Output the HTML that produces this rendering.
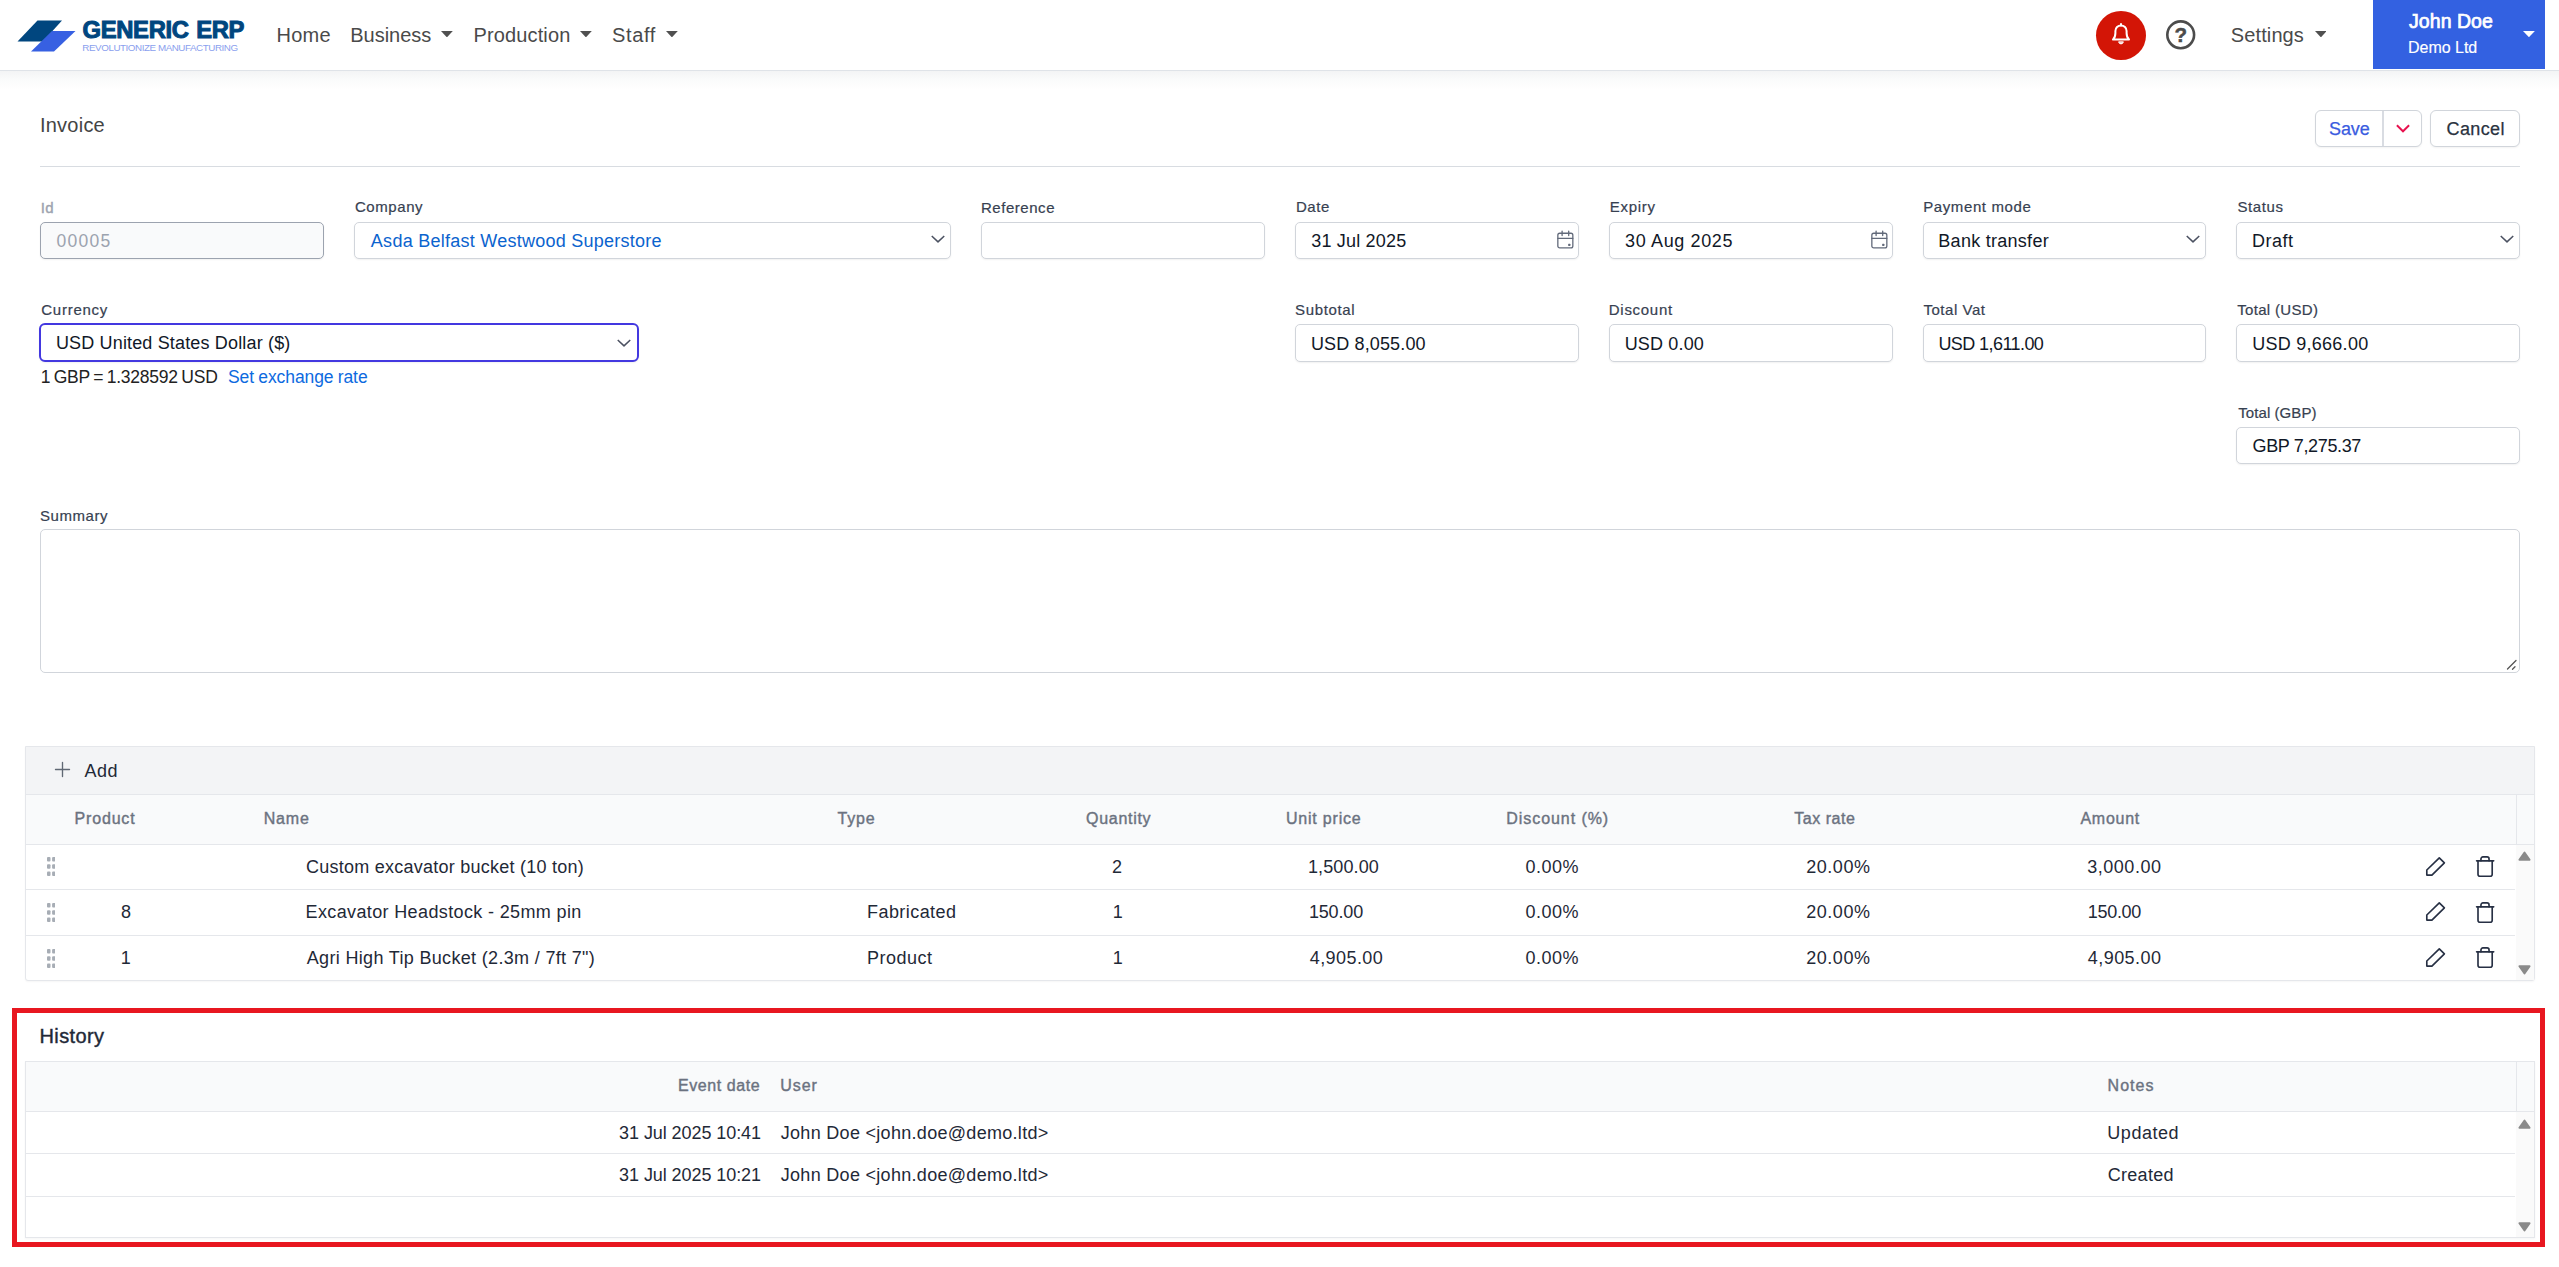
<!DOCTYPE html>
<html lang="en">
<head>
<meta charset="utf-8">
<title>Invoice - Generic ERP</title>
<style>
*{box-sizing:border-box;margin:0;padding:0}
html,body{width:2559px;height:1267px;overflow:hidden;background:#fff}
body{font-family:"Liberation Sans",sans-serif;color:#1f2937;position:relative}
.abs{position:absolute}
.t{position:absolute;white-space:nowrap;line-height:1}
#nav{position:absolute;left:0;top:0;width:2559px;height:71px;background:#fff;border-bottom:1px solid #dfe3e8}
#navshadow{position:absolute;left:0;top:71px;width:2559px;height:19px;background:linear-gradient(#f3f4f5,#fafbfb 45%,#fff)}
.caret{position:absolute;width:0;height:0;border-left:5.8px solid transparent;border-right:5.8px solid transparent;border-top:7px solid #505050}
#user{position:absolute;left:2373px;top:0;width:172px;height:69px;background:#3361e1}
.inp{position:absolute;border:1px solid #d1d5db;border-radius:5px;background:#fff;box-shadow:0 1px 2px rgba(0,0,0,.06)}
.hl{position:absolute;height:1px;background:#e5e7eb}
.vl{position:absolute;width:1px;background:#e5e7eb}
.dots{position:absolute;width:9px;height:19px}
</style>
</head>
<body>
<div id="nav">
<svg class="abs" style="left:16px;top:18px" width="62" height="36" viewBox="0 0 62 36">
<polygon points="21.5,2.5 46,2.5 27,23.5 1.5,23.5" fill="#00467f"/>
<polygon points="36,13 59.5,13 38,33.5 15,33.5" fill="#3760e2"/>
</svg>
<div class="t" id="brand1" style="left:82.50px;top:18px;font-size:23.8px;color:#00467f;letter-spacing:-0.320px;word-spacing:1.200px;font-weight:700;-webkit-text-stroke:1.0px #00467f;">GENERIC ERP</div>
<div class="t" id="brand2" style="left:82.37px;top:43px;font-size:9.8px;color:#8aa0ee;letter-spacing:-0.436px;">REVOLUTIONIZE MANUFACTURING</div>
<div class="t" id="n1" style="left:276.56px;top:25px;font-size:20px;color:#4a4a4a;letter-spacing:0.242px;">Home</div>
<div class="t" id="n2" style="left:350.26px;top:25px;font-size:20px;color:#4a4a4a;letter-spacing:-0.010px;">Business</div>
<svg class="abs" style="left:441.1px;top:31.1px" width="11.8" height="6.4" viewBox="0 0 11.8 6.4"><polygon points="0,0 11.8,0 5.9,6.4" fill="#505050"/></svg>
<div class="t" id="n3" style="left:473.56px;top:25px;font-size:20px;color:#4a4a4a;letter-spacing:0.123px;">Production</div>
<svg class="abs" style="left:580.1px;top:31.1px" width="11.8" height="6.4" viewBox="0 0 11.8 6.4"><polygon points="0,0 11.8,0 5.9,6.4" fill="#505050"/></svg>
<div class="t" id="n4" style="left:612.12px;top:25px;font-size:20px;color:#4a4a4a;letter-spacing:0.596px;">Staff</div>
<svg class="abs" style="left:666.1px;top:31.1px" width="11.8" height="6.4" viewBox="0 0 11.8 6.4"><polygon points="0,0 11.8,0 5.9,6.4" fill="#505050"/></svg>
<div class="abs" style="left:2096px;top:11px;width:50px;height:49px;border-radius:50%;background:#d31506"></div>
<svg class="abs" style="left:2108.700px;top:21.300px" width="24" height="26" viewBox="0 0 24 26" fill="none" stroke="#fff" stroke-width="2" stroke-linecap="round" stroke-linejoin="round">
<path d="M4 18.500h16c-1.800-1.600-2.400-3.400-2.400-6.500V10a5.600 5.600 0 0 0-11.200 0v2c0 3.100-.6 4.900-2.400 6.500z"/>
<path d="M12 4.400V3"/>
<path d="M9.700 21.200a2.400 2.400 0 0 0 4.600 0z" fill="#fff" stroke-width="1"/>
</svg>
<svg class="abs" style="left:2164px;top:18px" width="34" height="34" viewBox="0 0 34 34">
<circle cx="16.700" cy="16.800" r="13.400" fill="none" stroke="#4c4c4c" stroke-width="2.600"/>
<text x="16.800" y="23.900" text-anchor="middle" font-family="Liberation Sans, sans-serif" font-weight="700" font-size="20.500" fill="#4c4c4c" stroke="#4c4c4c" stroke-width=".5">?</text>
</svg>
<div class="t" id="n5" style="left:2230.82px;top:25px;font-size:20px;color:#4a4a4a;letter-spacing:0.110px;">Settings</div>
<svg class="abs" style="left:2314.6px;top:31.1px" width="11.8" height="6.4" viewBox="0 0 11.8 6.4"><polygon points="0,0 11.8,0 5.9,6.4" fill="#505050"/></svg>
<div id="user"></div>
<div class="t" id="u1" style="left:2409.09px;top:12px;font-size:19.5px;color:#fff;letter-spacing:0.036px;-webkit-text-stroke:0.7px #fff;">John Doe</div>
<div class="t" id="u2" style="left:2408.07px;top:40px;font-size:16px;color:#fff;letter-spacing:-0.027px;-webkit-text-stroke:0.15px #fff;">Demo Ltd</div>
<svg class="abs" style="left:2523.3px;top:31.1px" width="11.9" height="6.2" viewBox="0 0 11.9 6.2"><polygon points="0,0 11.9,0 5.95,6.2" fill="#fff"/></svg>
</div>
<div id="navshadow"></div>
<div class="t" id="title" style="left:39.90px;top:115px;font-size:20px;color:#444;letter-spacing:0.248px;">Invoice</div>
<div class="abs" style="left:2315px;top:110px;width:107px;height:37px;border:1px solid #d1d5db;border-radius:6px;background:#fff;box-shadow:0 1px 2px rgba(0,0,0,.05)"></div>
<div class="abs" style="left:2382px;top:111px;width:2px;height:35px;background:#d9dce2"></div>
<svg class="abs" style="left:2395px;top:122px" width="16" height="13" viewBox="0 0 16 13" fill="none" stroke="#e8124f" stroke-width="1.900" stroke-linecap="butt" stroke-linejoin="miter"><path d="M1.900 3.300L8 9.300L14.100 3.300"/></svg>
<div class="abs" style="left:2430px;top:110px;width:90px;height:37px;border:1px solid #d1d5db;border-radius:6px;background:#fff;box-shadow:0 1px 2px rgba(0,0,0,.05)"></div>
<div class="abs" style="left:40px;top:166px;width:2480px;height:1px;background:#d8dce1"></div>
<div class="t" id="bsave" style="left:2329.12px;top:120px;font-size:18px;color:#3a5ce0;letter-spacing:-0.144px;-webkit-text-stroke:0.25px #3a5ce0;">Save</div>
<div class="t" id="bcancel" style="left:2446.53px;top:120px;font-size:18px;color:#2a3240;letter-spacing:0.390px;-webkit-text-stroke:0.25px #2a3240;">Cancel</div>
<div class="t" style="left:40.71px;top:200px;font-size:15px;color:#9ca3af;letter-spacing:0.339px;-webkit-text-stroke:0.4px #9ca3af;">Id</div>
<div class="inp" style="left:40.00px;top:222px;width:283.75px;height:37px;background:#f9fafb;border-color:#9ca3af;"></div>
<div class="t" style="left:56.57px;top:233px;font-size:17.5px;color:#9ca3af;letter-spacing:1.251px;">00005</div>
<div class="t" style="left:354.91px;top:199px;font-size:15px;color:#374151;letter-spacing:0.586px;-webkit-text-stroke:0.2px #374151;">Company</div>
<div class="inp" style="left:353.75px;top:222px;width:597.50px;height:37px;"><svg class="abs" style="right:4.25px;top:8.26px" width="16" height="16" viewBox="0 0 16 16" fill="none" stroke="#4b5161" stroke-width="1.500" stroke-linecap="butt" stroke-linejoin="round"><path d="M1.750 5L8 10.850L14.250 5"/></svg></div>
<div class="t" style="left:370.86px;top:232px;font-size:18px;color:#0b63ce;letter-spacing:0.256px;">Asda Belfast Westwood Superstore</div>
<div class="t" style="left:980.97px;top:200px;font-size:15px;color:#374151;letter-spacing:0.538px;-webkit-text-stroke:0.2px #374151;">Reference</div>
<div class="inp" style="left:981.25px;top:222px;width:283.75px;height:37px;"></div>
<div class="t" style="left:1295.97px;top:199px;font-size:15px;color:#374151;letter-spacing:0.536px;-webkit-text-stroke:0.2px #374151;">Date</div>
<div class="inp" style="left:1295.00px;top:222px;width:283.75px;height:37px;"><svg class="abs" style="left:259px;top:6px" width="21" height="22" viewBox="0 0 21 22" fill="none" stroke="#626a7a" stroke-width="1.300" stroke-linecap="round" stroke-linejoin="round"><rect x="2.840" y="4.260" width="15" height="14.680" rx="1.900"/><path d="M7.100 2.050V6.500M13.700 2.050V6.500M2.840 9.300H17.840"/><rect x="13.200" y="14.750" width="2.200" height="2.200" rx=".5" fill="#626a7a" stroke="none"/></svg></div>
<div class="t" style="left:1311.29px;top:232px;font-size:18px;color:#111827;letter-spacing:0.179px;">31 Jul 2025</div>
<div class="t" style="left:1609.77px;top:199px;font-size:15px;color:#374151;letter-spacing:0.691px;-webkit-text-stroke:0.2px #374151;">Expiry</div>
<div class="inp" style="left:1608.75px;top:222px;width:283.75px;height:37px;"><svg class="abs" style="left:259px;top:6px" width="21" height="22" viewBox="0 0 21 22" fill="none" stroke="#626a7a" stroke-width="1.300" stroke-linecap="round" stroke-linejoin="round"><rect x="2.840" y="4.260" width="15" height="14.680" rx="1.900"/><path d="M7.100 2.050V6.500M13.700 2.050V6.500M2.840 9.300H17.840"/><rect x="13.200" y="14.750" width="2.200" height="2.200" rx=".5" fill="#626a7a" stroke="none"/></svg></div>
<div class="t" style="left:1625.09px;top:232px;font-size:18px;color:#111827;letter-spacing:0.629px;">30 Aug 2025</div>
<div class="t" style="left:1923.17px;top:199px;font-size:15px;color:#374151;letter-spacing:0.610px;-webkit-text-stroke:0.2px #374151;">Payment mode</div>
<div class="inp" style="left:1922.50px;top:222px;width:283.75px;height:37px;"><svg class="abs" style="right:4.25px;top:8.26px" width="16" height="16" viewBox="0 0 16 16" fill="none" stroke="#4b5161" stroke-width="1.500" stroke-linecap="butt" stroke-linejoin="round"><path d="M1.750 5L8 10.850L14.250 5"/></svg></div>
<div class="t" style="left:1938.32px;top:232px;font-size:18px;color:#111827;letter-spacing:0.276px;">Bank transfer</div>
<div class="t" style="left:2237.40px;top:199px;font-size:15px;color:#374151;letter-spacing:0.620px;-webkit-text-stroke:0.2px #374151;">Status</div>
<div class="inp" style="left:2236.25px;top:222px;width:283.75px;height:37px;"><svg class="abs" style="right:4.25px;top:8.26px" width="16" height="16" viewBox="0 0 16 16" fill="none" stroke="#4b5161" stroke-width="1.500" stroke-linecap="butt" stroke-linejoin="round"><path d="M1.750 5L8 10.850L14.250 5"/></svg></div>
<div class="t" style="left:2252.02px;top:232px;font-size:18px;color:#111827;letter-spacing:0.508px;">Draft</div>
<div class="t" style="left:41.31px;top:302px;font-size:15px;color:#374151;letter-spacing:0.731px;-webkit-text-stroke:0.2px #374151;">Currency</div>
<div class="inp" style="left:39.00px;top:323px;width:599.50px;height:39px;border:2px solid #4338e0;border-radius:6px;"><svg class="abs" style="right:4.6px;top:9.5px" width="16" height="16" viewBox="0 0 16 16" fill="none" stroke="#4b5161" stroke-width="1.500" stroke-linecap="butt" stroke-linejoin="round"><path d="M1.750 5L8 10.850L14.250 5"/></svg></div>
<div class="t" style="left:55.91px;top:334px;font-size:18px;color:#111827;letter-spacing:0.160px;">USD United States Dollar ($)</div>
<div class="t" style="left:40.73px;top:369px;font-size:17.5px;color:#222;letter-spacing:-0.238px;word-spacing:-1.100px;">1 GBP = 1.328592 USD</div>
<div class="t" style="left:227.99px;top:369px;font-size:17.5px;color:#0d6adf;letter-spacing:-0.074px;word-spacing:-0.600px;">Set exchange rate</div>
<div class="t" style="left:1295.10px;top:302px;font-size:15px;color:#374151;letter-spacing:0.652px;-webkit-text-stroke:0.2px #374151;">Subtotal</div>
<div class="inp" style="left:1295.00px;top:324px;width:283.75px;height:38px;"></div>
<div class="t" style="left:1310.91px;top:335px;font-size:18px;color:#111827;letter-spacing:0.146px;">USD 8,055.00</div>
<div class="t" style="left:1608.82px;top:302px;font-size:15px;color:#374151;letter-spacing:0.711px;-webkit-text-stroke:0.2px #374151;">Discount</div>
<div class="inp" style="left:1608.75px;top:324px;width:283.75px;height:38px;"></div>
<div class="t" style="left:1624.66px;top:335px;font-size:18px;color:#111827;letter-spacing:0.165px;">USD 0.00</div>
<div class="t" style="left:1923.46px;top:302px;font-size:15px;color:#374151;letter-spacing:0.529px;-webkit-text-stroke:0.2px #374151;">Total Vat</div>
<div class="inp" style="left:1922.50px;top:324px;width:283.75px;height:38px;"></div>
<div class="t" style="left:1938.41px;top:335px;font-size:18px;color:#111827;letter-spacing:-0.573px;">USD 1,611.00</div>
<div class="t" style="left:2237.21px;top:302px;font-size:15px;color:#374151;letter-spacing:0.319px;-webkit-text-stroke:0.2px #374151;">Total (USD)</div>
<div class="inp" style="left:2236.25px;top:324px;width:283.75px;height:38px;"></div>
<div class="t" style="left:2252.16px;top:335px;font-size:18px;color:#111827;letter-spacing:0.268px;">USD 9,666.00</div>
<div class="t" style="left:2238.26px;top:405px;font-size:15px;color:#374151;letter-spacing:0.074px;-webkit-text-stroke:0.2px #374151;">Total (GBP)</div>
<div class="inp" style="left:2236.25px;top:427px;width:283.75px;height:37px;"></div>
<div class="t" style="left:2252.50px;top:437px;font-size:18px;color:#111827;letter-spacing:-0.355px;">GBP 7,275.37</div>
<div class="t" style="left:40.00px;top:508px;font-size:15px;color:#374151;letter-spacing:0.570px;-webkit-text-stroke:0.2px #374151;">Summary</div>
<div class="inp" style="left:40.00px;top:529px;width:2480.00px;height:144px;box-shadow:none;"><svg class="abs" style="right:1px;bottom:1px" width="12" height="12" viewBox="0 0 12 12" stroke="#555" stroke-width="1.300" stroke-linecap="round"><path d="M1.500 10L10 1.500M6.500 10.200L9 7.700"/></svg></div>
<div class="abs" style="left:25px;top:746px;width:2510px;height:235px;border:1px solid #e5e7eb;background:#fff;box-shadow:0 1px 2px rgba(0,0,0,.04);border-radius:0 0 3px 3px;overflow:hidden;"></div>
<div class="abs" style="left:26px;top:747px;width:2508px;height:48px;background:#f3f4f6;"></div>
<div class="abs" style="left:26px;top:795px;width:2508px;height:50px;background:#f9fafb;"></div>
<div class="abs" style="left:2515.5px;top:845px;width:18.5px;height:135px;background:#fafafa;"></div>
<div class="abs" style="left:26px;top:794px;width:2508px;height:1px;background:#e5e7eb;"></div>
<div class="abs" style="left:26px;top:844px;width:2508px;height:1px;background:#e5e7eb;"></div>
<div class="abs" style="left:26px;top:889px;width:2489px;height:1px;background:#e5e7eb;"></div>
<div class="abs" style="left:26px;top:935px;width:2489px;height:1px;background:#e5e7eb;"></div>
<div class="abs" style="left:2516px;top:795px;width:1px;height:50px;background:#e5e7eb;"></div>
<svg class="abs" style="left:54.100px;top:761.400px" width="17" height="17" viewBox="0 0 17 17" stroke="#606874" stroke-width="1.350" stroke-linecap="round"><path d="M8.500 1.500v14M1.500 8.500h14"/></svg>
<div class="t" style="left:84.46px;top:762px;font-size:18px;color:#1f2937;letter-spacing:0.560px;">Add</div>
<div class="t" style="left:74.49px;top:811px;font-size:16px;color:#6b7280;letter-spacing:0.839px;-webkit-text-stroke:0.4px #6b7280;">Product</div>
<div class="t" style="left:263.69px;top:811px;font-size:16px;color:#6b7280;letter-spacing:0.815px;-webkit-text-stroke:0.4px #6b7280;">Name</div>
<div class="t" style="left:837.44px;top:811px;font-size:16px;color:#6b7280;letter-spacing:0.864px;-webkit-text-stroke:0.4px #6b7280;">Type</div>
<div class="t" style="left:1086.00px;top:811px;font-size:16px;color:#6b7280;letter-spacing:0.715px;-webkit-text-stroke:0.4px #6b7280;">Quantity</div>
<div class="t" style="left:1285.97px;top:811px;font-size:16px;color:#6b7280;letter-spacing:0.796px;-webkit-text-stroke:0.4px #6b7280;">Unit price</div>
<div class="t" style="left:1506.29px;top:811px;font-size:16px;color:#6b7280;letter-spacing:0.935px;-webkit-text-stroke:0.4px #6b7280;">Discount (%)</div>
<div class="t" style="left:1794.14px;top:811px;font-size:16px;color:#6b7280;letter-spacing:0.556px;-webkit-text-stroke:0.4px #6b7280;">Tax rate</div>
<div class="t" style="left:2080.48px;top:811px;font-size:16px;color:#6b7280;letter-spacing:0.728px;-webkit-text-stroke:0.4px #6b7280;">Amount</div>
<svg class="abs" style="left:46.800px;top:857.4px" width="8.600" height="19" viewBox="0 0 8.600 19" fill="#a7adb5"><rect x="0" y="0" width="3.500" height="4.400" rx="1"/><rect x="5.100" y="0" width="3.500" height="4.400" rx="1"/><rect x="0" y="7.300" width="3.500" height="4.400" rx="1"/><rect x="5.100" y="7.300" width="3.500" height="4.400" rx="1"/><rect x="0" y="14.600" width="3.500" height="4.400" rx="1"/><rect x="5.100" y="14.600" width="3.500" height="4.400" rx="1"/></svg>
<div class="t" style="left:306.00px;top:858px;font-size:18px;color:#1f2937;letter-spacing:0.243px;">Custom excavator bucket (10 ton)</div>
<div class="t" style="left:1112.10px;top:858px;font-size:18px;color:#1f2937;">2</div>
<div class="t" style="left:1307.93px;top:858px;font-size:18px;color:#1f2937;letter-spacing:0.127px;">1,500.00</div>
<div class="t" style="left:1525.47px;top:858px;font-size:18px;color:#1f2937;letter-spacing:0.499px;">0.00%</div>
<div class="t" style="left:1806.20px;top:858px;font-size:18px;color:#1f2937;letter-spacing:0.554px;">20.00%</div>
<div class="t" style="left:2087.19px;top:858px;font-size:18px;color:#1f2937;letter-spacing:0.532px;">3,000.00</div>
<svg class="abs" style="left:2423px;top:855.7px" width="24" height="22" viewBox="0 0 24 22" fill="none" stroke="#273044" stroke-width="1.650" stroke-linejoin="round"><path d="M16.300 1.900L21.400 6.800L8.900 19.100H3.800V14z"/></svg>
<svg class="abs" style="left:2474px;top:855.0px" width="22" height="23" viewBox="0 0 22 23" fill="none" stroke="#273044" stroke-width="1.650" stroke-linecap="round" stroke-linejoin="round"><path d="M2.600 5.850H19.700"/><path d="M6.950 5.850V3.900a2 2 0 0 1 2-2h4.100a2 2 0 0 1 2 2V5.850"/><path d="M4 5.850V19.200a2 2 0 0 0 2 2h10.200a2 2 0 0 0 2-2V5.850"/></svg>
<svg class="abs" style="left:46.800px;top:903.0px" width="8.600" height="19" viewBox="0 0 8.600 19" fill="#a7adb5"><rect x="0" y="0" width="3.500" height="4.400" rx="1"/><rect x="5.100" y="0" width="3.500" height="4.400" rx="1"/><rect x="0" y="7.300" width="3.500" height="4.400" rx="1"/><rect x="5.100" y="7.300" width="3.500" height="4.400" rx="1"/><rect x="0" y="14.600" width="3.500" height="4.400" rx="1"/><rect x="5.100" y="14.600" width="3.500" height="4.400" rx="1"/></svg>
<div class="t" style="left:120.88px;top:903px;font-size:18px;color:#1f2937;">8</div>
<div class="t" style="left:305.52px;top:903px;font-size:18px;color:#1f2937;letter-spacing:0.370px;">Excavator Headstock - 25mm pin</div>
<div class="t" style="left:867.02px;top:903px;font-size:18px;color:#1f2937;letter-spacing:0.440px;">Fabricated</div>
<div class="t" style="left:1112.73px;top:903px;font-size:18px;color:#1f2937;">1</div>
<div class="t" style="left:1308.93px;top:903px;font-size:18px;color:#1f2937;letter-spacing:-0.163px;">150.00</div>
<div class="t" style="left:1525.47px;top:903px;font-size:18px;color:#1f2937;letter-spacing:0.499px;">0.00%</div>
<div class="t" style="left:1806.20px;top:903px;font-size:18px;color:#1f2937;letter-spacing:0.554px;">20.00%</div>
<div class="t" style="left:2087.83px;top:903px;font-size:18px;color:#1f2937;letter-spacing:-0.323px;">150.00</div>
<svg class="abs" style="left:2423px;top:901.3px" width="24" height="22" viewBox="0 0 24 22" fill="none" stroke="#273044" stroke-width="1.650" stroke-linejoin="round"><path d="M16.300 1.900L21.400 6.800L8.900 19.100H3.800V14z"/></svg>
<svg class="abs" style="left:2474px;top:900.6px" width="22" height="23" viewBox="0 0 22 23" fill="none" stroke="#273044" stroke-width="1.650" stroke-linecap="round" stroke-linejoin="round"><path d="M2.600 5.850H19.700"/><path d="M6.950 5.850V3.900a2 2 0 0 1 2-2h4.100a2 2 0 0 1 2 2V5.850"/><path d="M4 5.850V19.200a2 2 0 0 0 2 2h10.200a2 2 0 0 0 2-2V5.850"/></svg>
<svg class="abs" style="left:46.800px;top:948.6px" width="8.600" height="19" viewBox="0 0 8.600 19" fill="#a7adb5"><rect x="0" y="0" width="3.500" height="4.400" rx="1"/><rect x="5.100" y="0" width="3.500" height="4.400" rx="1"/><rect x="0" y="7.300" width="3.500" height="4.400" rx="1"/><rect x="5.100" y="7.300" width="3.500" height="4.400" rx="1"/><rect x="0" y="14.600" width="3.500" height="4.400" rx="1"/><rect x="5.100" y="14.600" width="3.500" height="4.400" rx="1"/></svg>
<div class="t" style="left:120.63px;top:949px;font-size:18px;color:#1f2937;">1</div>
<div class="t" style="left:306.76px;top:949px;font-size:18px;color:#1f2937;letter-spacing:0.331px;">Agri High Tip Bucket (2.3m / 7ft 7")</div>
<div class="t" style="left:867.02px;top:949px;font-size:18px;color:#1f2937;letter-spacing:0.506px;">Product</div>
<div class="t" style="left:1112.73px;top:949px;font-size:18px;color:#1f2937;">1</div>
<div class="t" style="left:1309.69px;top:949px;font-size:18px;color:#1f2937;letter-spacing:0.432px;">4,905.00</div>
<div class="t" style="left:1525.47px;top:949px;font-size:18px;color:#1f2937;letter-spacing:0.499px;">0.00%</div>
<div class="t" style="left:1806.20px;top:949px;font-size:18px;color:#1f2937;letter-spacing:0.554px;">20.00%</div>
<div class="t" style="left:2087.79px;top:949px;font-size:18px;color:#1f2937;letter-spacing:0.446px;">4,905.00</div>
<svg class="abs" style="left:2423px;top:946.9px" width="24" height="22" viewBox="0 0 24 22" fill="none" stroke="#273044" stroke-width="1.650" stroke-linejoin="round"><path d="M16.300 1.900L21.400 6.800L8.900 19.100H3.800V14z"/></svg>
<svg class="abs" style="left:2474px;top:946.2px" width="22" height="23" viewBox="0 0 22 23" fill="none" stroke="#273044" stroke-width="1.650" stroke-linecap="round" stroke-linejoin="round"><path d="M2.600 5.850H19.700"/><path d="M6.950 5.850V3.900a2 2 0 0 1 2-2h4.100a2 2 0 0 1 2 2V5.850"/><path d="M4 5.850V19.200a2 2 0 0 0 2 2h10.200a2 2 0 0 0 2-2V5.850"/></svg>
<svg class="abs" style="left:2518.1px;top:851.2px" width="13" height="10" viewBox="0 0 13 10" fill="#8a8a8a" stroke="#8a8a8a" stroke-width="1.900" stroke-linejoin="round"><path d="M6.500 1.600L11.600 8.700H1.400z"/></svg>
<svg class="abs" style="left:2518.1px;top:965.3px" width="13" height="10" viewBox="0 0 13 10" fill="#8a8a8a" stroke="#8a8a8a" stroke-width="1.900" stroke-linejoin="round"><path d="M6.500 8.400L11.600 1.300H1.400z"/></svg>
<div class="abs" style="left:12px;top:1008px;width:2533px;height:239px;border:5px solid #e81720;"></div>
<div class="t" style="left:39.56px;top:1026px;font-size:20px;color:#1f2937;letter-spacing:0.376px;-webkit-text-stroke:0.4px #1f2937;">History</div>
<div class="abs" style="left:25px;top:1061px;width:2510px;height:177px;border:1px solid #e5e7eb;background:#fff;box-shadow:0 1px 2px rgba(0,0,0,.04);"></div>
<div class="abs" style="left:26px;top:1062px;width:2508px;height:49px;background:#f9fafb;"></div>
<div class="abs" style="left:2515.5px;top:1112px;width:18.5px;height:125px;background:#fafafa;"></div>
<div class="abs" style="left:26px;top:1111px;width:2508px;height:1px;background:#e5e7eb;"></div>
<div class="abs" style="left:26px;top:1153px;width:2489px;height:1px;background:#e5e7eb;"></div>
<div class="abs" style="left:26px;top:1196px;width:2489px;height:1px;background:#e5e7eb;"></div>
<div class="abs" style="left:2516px;top:1062px;width:1px;height:49px;background:#e5e7eb;"></div>
<div class="t" style="left:677.89px;top:1078px;font-size:16px;color:#6b7280;letter-spacing:0.583px;-webkit-text-stroke:0.4px #6b7280;">Event date</div>
<div class="t" style="left:780.27px;top:1078px;font-size:16px;color:#6b7280;letter-spacing:0.922px;-webkit-text-stroke:0.4px #6b7280;">User</div>
<div class="t" style="left:2107.59px;top:1078px;font-size:16px;color:#6b7280;letter-spacing:1.009px;-webkit-text-stroke:0.4px #6b7280;">Notes</div>
<div class="t" style="left:619.09px;top:1124px;font-size:18px;color:#1f2937;letter-spacing:-0.074px;">31 Jul 2025 10:41</div>
<div class="t" style="left:780.78px;top:1124px;font-size:18px;color:#1f2937;letter-spacing:0.299px;">John Doe &lt;john.doe@demo.ltd&gt;</div>
<div class="t" style="left:2107.31px;top:1124px;font-size:18px;color:#1f2937;letter-spacing:0.545px;">Updated</div>
<div class="t" style="left:619.09px;top:1166px;font-size:18px;color:#1f2937;letter-spacing:-0.074px;">31 Jul 2025 10:21</div>
<div class="t" style="left:780.78px;top:1166px;font-size:18px;color:#1f2937;letter-spacing:0.299px;">John Doe &lt;john.doe@demo.ltd&gt;</div>
<div class="t" style="left:2107.70px;top:1166px;font-size:18px;color:#1f2937;letter-spacing:0.297px;">Created</div>
<svg class="abs" style="left:2518.3px;top:1118.5px" width="13" height="10" viewBox="0 0 13 10" fill="#8a8a8a" stroke="#8a8a8a" stroke-width="1.900" stroke-linejoin="round"><path d="M6.500 1.600L11.600 8.700H1.400z"/></svg>
<svg class="abs" style="left:2518.3px;top:1222.2px" width="13" height="10" viewBox="0 0 13 10" fill="#8a8a8a" stroke="#8a8a8a" stroke-width="1.900" stroke-linejoin="round"><path d="M6.500 8.400L11.600 1.300H1.400z"/></svg>
</body>
</html>
